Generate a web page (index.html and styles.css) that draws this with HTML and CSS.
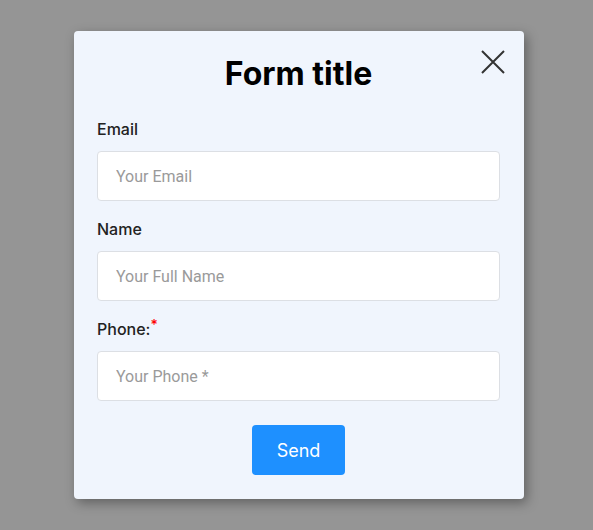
FILE: index.html
```html
<!DOCTYPE html>
<html>
<head>
<meta charset="utf-8">
<link rel="stylesheet" href="styles.css">
</head>
<body>
<div class="overlay">
  <div class="modal">
    <button class="close" aria-label="Close">
      <svg width="24" height="24" viewBox="0 0 24 24"><path d="M1 1L23 23M23 1L1 23" stroke="#333" stroke-width="2" fill="none"/></svg>
    </button>
    <h1 class="title">Form title</h1>
    <form class="form">
      <div class="field">
        <label class="label">Email</label>
        <input class="input" type="text" placeholder="Your Email">
      </div>
      <div class="field">
        <label class="label">Name</label>
        <input class="input" type="text" placeholder="Your Full Name">
      </div>
      <div class="field">
        <label class="label">Phone:<span class="req">*</span></label>
        <input class="input" type="text" placeholder="Your Phone *">
      </div>
      <div class="actions">
        <button class="send" type="button">Send</button>
      </div>
    </form>
  </div>
</div>
</body>
</html>
```
FILE: styles.css
```css
html, body {
  margin: 0;
  padding: 0;
  height: 100%;
}
body {
  background: #959595;
  font-family: Inter, "Noto Sans", sans-serif;
}
.overlay {
  height: 100%;
  display: flex;
  align-items: center;
  justify-content: center;
  padding-left: 5px;
  box-sizing: border-box;
}
.modal {
  position: relative;
  width: 450px;
  height: 468px;
  box-sizing: border-box;
  background: #f0f5fd;
  border-radius: 4px;
  box-shadow: 3px 4px 12px rgba(0,0,0,0.35);
  padding: 24px 24px 24px 23px;
}
.close {
  position: absolute;
  top: 19px;
  right: 19px;
  width: 24px;
  height: 24px;
  padding: 0;
  border: 0;
  background: none;
  cursor: pointer;
}
.close svg { display: block; }
.title {
  margin: 0;
  text-align: center;
  font-size: 32px;
  line-height: 38px;
  font-weight: 700;
  color: #000;
}
.form {
  margin-top: 26px;
  display: flex;
  flex-direction: column;
  gap: 18px;
}
.field {
  display: flex;
  flex-direction: column;
  gap: 12px;
}
.label {
  font-size: 16px;
  line-height: 20px;
  font-weight: 500;
  color: #222;
}
.req {
  color: #f00;
  font-size: 14px;
  vertical-align: top;
  position: relative;
  top: -4px;
}
.input {
  height: 50px;
  box-sizing: border-box;
  border: 1px solid #dcdfe4;
  border-radius: 4px;
  background: #fff;
  padding: 0 18px;
  font-family: Roboto, sans-serif;
  font-size: 16px;
  color: #333;
  outline: none;
}
.input::placeholder {
  color: #9a9a9a;
}
.actions {
  display: flex;
  justify-content: center;
  margin-top: 6px;
}
.send {
  width: 93px;
  height: 50px;
  border: 0;
  border-radius: 4px;
  background: #1e90ff;
  color: #fff;
  font-family: Inter, sans-serif;
  font-size: 18px;
  font-weight: 400;
}
```
